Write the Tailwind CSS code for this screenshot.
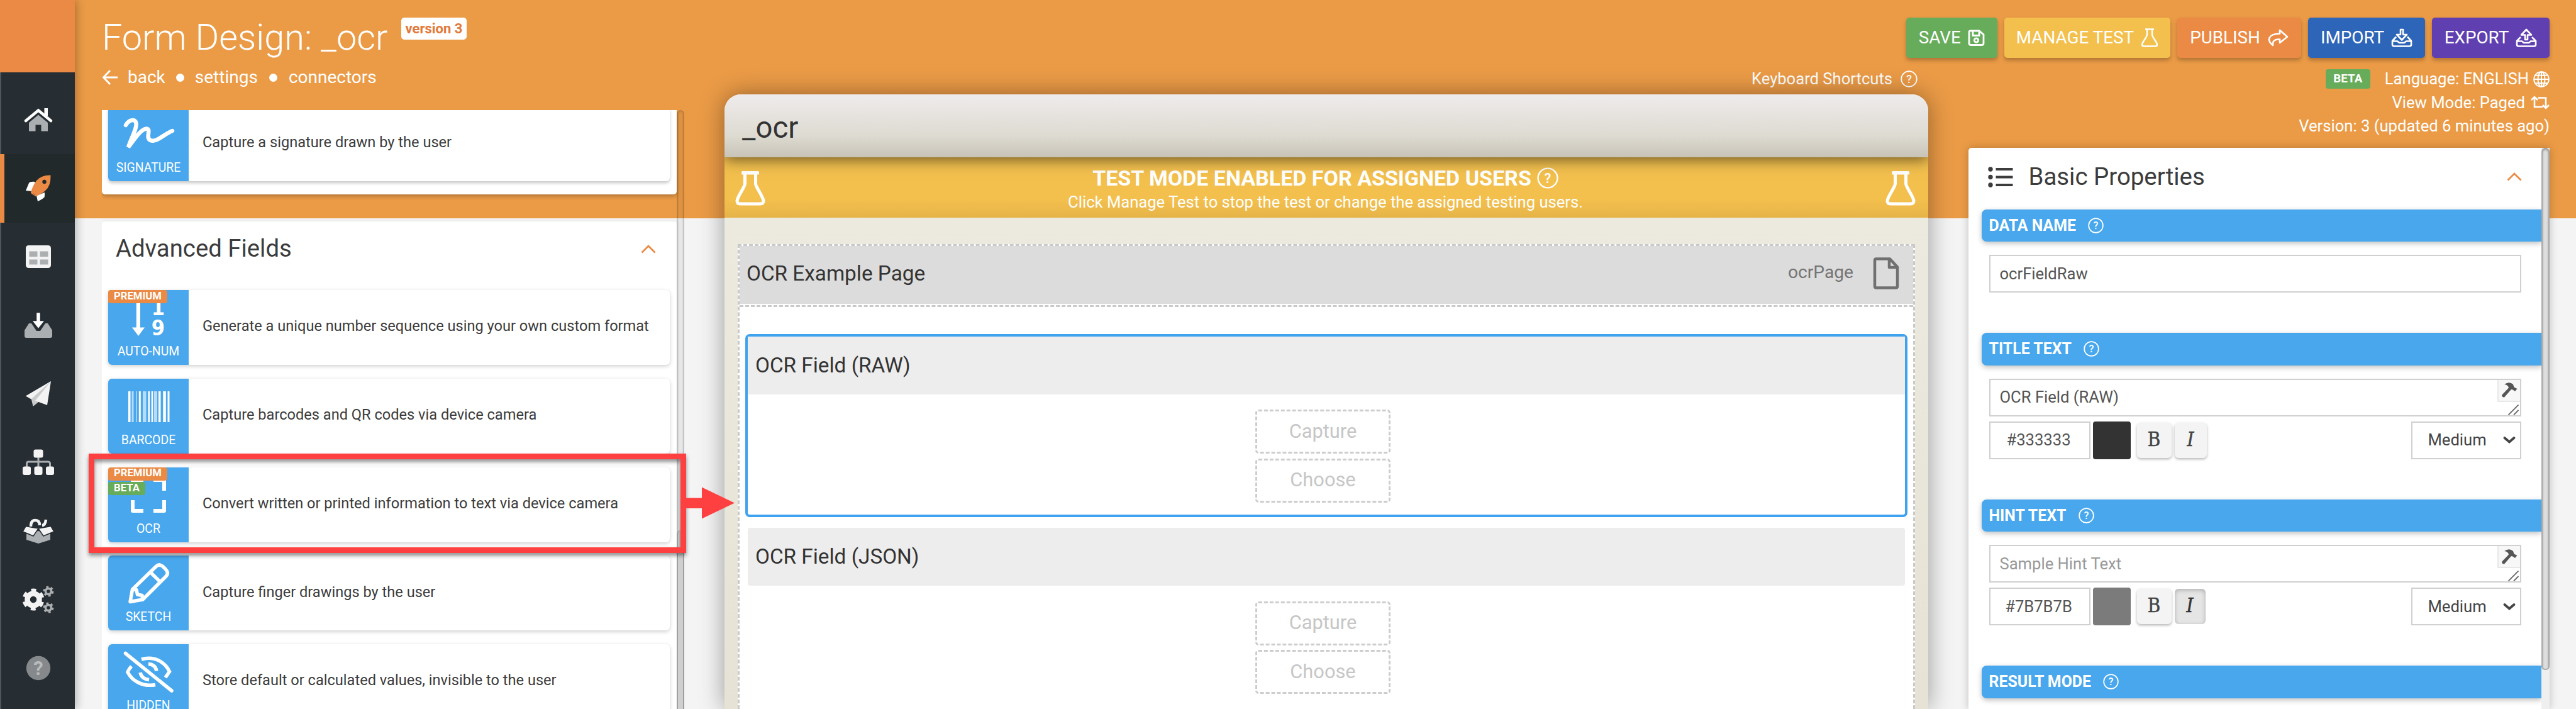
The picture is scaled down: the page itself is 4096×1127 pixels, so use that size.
<!DOCTYPE html>
<html lang="en">
<head>
<meta charset="utf-8">
<title>Form Design: _ocr</title>
<script src="https://cdn.jsdelivr.net/npm/@tailwindcss/browser@4"></script>
</head>
<body class="relative flex h-[1127px] w-[4096px] overflow-hidden bg-[#f4f4f4] font-['Roboto',sans-serif] text-[#3c3c3c]">

<svg class="hidden">
  <symbol id="help" viewBox="0 0 26 26">
    <circle cx="13" cy="13" r="11.8" fill="none" stroke="currentColor" stroke-width="1.8"/>
    <text x="13" y="19" text-anchor="middle" font-family="Roboto" font-weight="500" font-size="17" fill="currentColor">?</text>
  </symbol>
  <symbol id="flask" viewBox="0 0 48 56">
    <path d="M15.500 5 V21 C15.500 26 4 41 3 48 Q3 53 8 53 H40 Q45 53 45 48 C44 41 32.500 26 32.500 21 V5" fill="none" stroke="currentColor" stroke-width="5"/>
    <rect x="10" y="1" width="28" height="5.500" rx="1.500" fill="currentColor"/>
  </symbol>
  <symbol id="hammer" viewBox="0 0 26 26">
    <path d="M5 4 Q13 -1.500 19 4 L20.500 8.500 L25.500 11 L22 15 L18.500 12.500 L16 12 L5 24.500 Q1.500 25 1 21 L12 9.500 Q11 4.500 5 4Z" fill="#555"/>
  </symbol>
</svg>

<!-- Sidebar -->
<nav class="relative z-20 flex w-[119px] shrink-0 flex-col border-l-[2px] border-[#50575b] bg-[#262d33] shadow-[2px_0_14px_rgba(0,0,0,0.3)]">
  <div class="-ml-[2px] mb-[20.5px] h-[115px] shrink-0 bg-[#eb8a44]"></div>
  <div class="flex h-[109px] shrink-0 items-center justify-center">
    <svg class="size-[52px]" viewBox="-26 -26 52 52"><path d="M0 -7.500 L15 5 V18.500 H4.500 V8.500 H-4.500 V18.500 H-15 V5Z" fill="#abafb1"/><path d="M-20 2 L0 -14.500 L20 2" fill="none" stroke="#fff" stroke-width="4.500" stroke-linecap="round"/><rect x="9.500" y="-18" width="5.500" height="12" fill="#fff"/></svg>
  </div>
  <div class="-ml-[2px] flex h-[109px] shrink-0 items-center justify-center border-l-[7px] border-[#eb8a44] bg-[#22292b] pr-[5px]">
    <svg class="size-[52px]" viewBox="-26 -26 52 52"><path d="M-20 4 L-15 -8 Q-13 -11 -5 -10 L-10 5Z M-3 12 L10 7 V13 Q10 16 -1 21Z" fill="#fff"/><path d="M19.500 -20.500 Q20 -3 11 4 Q5 10 -5 13 L-7 9 L-12 7 Q-9 -4 -3 -12 Q5 -21 19.500 -20.500Z" fill="#eb8a44"/><path d="M-11 4 L-5 13 L-12 8Z" fill="#eb8a44"/><circle cx="9.500" cy="-10" r="3.200" fill="#22292b"/></svg>
  </div>
  <div class="flex h-[109px] shrink-0 items-center justify-center">
    <svg class="size-[52px]" viewBox="-26 -26 52 52"><rect x="-20" y="-18" width="40" height="36" rx="4.500" fill="#f3f3f3"/><path d="M-14.500 -8.500h13v8.500h-13z M2.500 -8.500h13v8.500h-13z M-14.500 4.500h13v8h-13z M2.500 4.500h13v8h-13z" fill="#abafb1"/></svg>
  </div>
  <div class="flex h-[109px] shrink-0 items-center justify-center">
    <svg class="size-[52px]" viewBox="-26 -26 52 52"><path d="M-15 -3 H-11 L-3 9 H3 L11 -3 H15 L22 8 V17 Q22 20 19 20 H-19 Q-22 20 -22 17 V8Z" fill="#abafb1"/><path d="M-3.500 -20.500 H3.500 V-7.500 H10.500 L0 6 L-10.500 -7.500 H-3.500Z" fill="#fff" stroke="#262d33" stroke-width="1.500"/></svg>
  </div>
  <div class="flex h-[109px] shrink-0 items-center justify-center">
    <svg class="size-[52px]" viewBox="-26 -26 52 52"><path d="M20 -20 L-20 3.500 L-11 9 L-8.500 20 L-1 14 Z" fill="#c9cbcc"/><path d="M20 -20 L-20 3.500 L-11 8Z M20 -20 L-5 11 L14 18Z" fill="#f3f3f3"/></svg>
  </div>
  <div class="flex h-[109px] shrink-0 items-center justify-center">
    <svg class="size-[52px]" viewBox="-26 -26 52 52"><path d="M0 -8 V7 M-18.500 7 V2 Q-18.500 -1 -15.500 -1 H15.500 Q18.500 -1 18.500 2 V7" fill="none" stroke="#abafb1" stroke-width="3"/><rect x="-7.500" y="-20.500" width="15" height="13" rx="3" fill="#f3f3f3"/><rect x="-25" y="6.500" width="13" height="13.500" rx="3" fill="#f3f3f3"/><rect x="-6.500" y="6.500" width="13" height="13.500" rx="3" fill="#f3f3f3"/><rect x="12" y="6.500" width="13" height="13.500" rx="3" fill="#f3f3f3"/></svg>
  </div>
  <div class="flex h-[109px] shrink-0 items-center justify-center">
    <svg class="size-[52px]" viewBox="-26 -26 52 52"><path d="M-19 5 L0 0 L19 5 V14 L0 20 L-19 14Z" fill="#abafb1"/><path d="M-12 -7 Q-12 -17 -5 -17 Q2 -17 2 -9 M6 -9 Q11 -9 12 -18" fill="none" stroke="#f3f3f3" stroke-width="4.500"/><path d="M-20 -7.500 L0 -4 L20 -7.500 L25 1 L8 8 L0 -4 L-8 8 L-25 1Z" fill="#f3f3f3" stroke="#262d33" stroke-width="1.500"/></svg>
  </div>
  <div class="flex h-[109px] shrink-0 items-center justify-center">
    <svg class="size-[52px]" viewBox="-26 -26 52 52"><circle cx="-8" cy="0" r="9.500" fill="none" stroke="#f3f3f3" stroke-width="8.500"/><circle cx="-8" cy="0" r="15" fill="none" stroke="#f3f3f3" stroke-width="5" stroke-dasharray="7.850 7.850" stroke-dashoffset="-4"/><circle cx="16" cy="-13" r="4.500" fill="none" stroke="#abafb1" stroke-width="3.600"/><circle cx="16" cy="-13" r="7" fill="none" stroke="#abafb1" stroke-width="3" stroke-dasharray="3.660 3.660"/><circle cx="16" cy="13" r="4.500" fill="none" stroke="#abafb1" stroke-width="3.600"/><circle cx="16" cy="13" r="7" fill="none" stroke="#abafb1" stroke-width="3" stroke-dasharray="3.660 3.660"/></svg>
  </div>
  <div class="flex h-[109px] shrink-0 items-center justify-center">
    <svg class="size-[52px]" viewBox="-26 -26 52 52"><circle r="19.200" fill="#85898c"/><text y="11" text-anchor="middle" font-family="Roboto" font-weight="700" font-size="31" fill="#b9bbbc">?</text></svg>
  </div>
</nav>

<main class="relative flex min-w-0 flex-1 flex-col bg-[linear-gradient(#eb9b46_0,#eb9b46_347.5px,#f4f4f4_347.5px)] pl-[43px] pr-[42px] text-white">
  <!-- Title and actions -->
  <header class="flex h-[92px] shrink-0 items-end justify-between">
    <div class="flex items-start pb-[1px]">
      <h1 class="w-[476px] whitespace-nowrap text-[57.6px] font-light leading-[62px]">Form Design: _ocr</h1>
      <span class="-mt-[1px] flex h-[35px] w-[104px] items-center justify-center rounded-[5px] bg-white text-[22px] font-bold text-[#e2793a]">version 3</span>
    </div>
    <div class="flex gap-[11px] text-[27.8px]">
      <button class="flex h-[64px] w-[145.500px] items-center justify-center gap-[11px] rounded-[5px] bg-[#67ac5b] shadow-[0_4px_6px_rgba(0,0,0,0.25)]">SAVE
        <svg class="h-[26px] w-[27px]" viewBox="0 0 27 26" fill="none" stroke="currentColor" stroke-width="2.800"><path d="M4 2 H18 L25 8 V22 Q25 24.500 22 24.500 H5 Q2 24.500 2 22 V4 Q2 2 4 2Z M8 2 V9.500 H18 V3"/><circle cx="13.500" cy="17" r="3.200"/></svg>
      </button>
      <button class="flex h-[64px] w-[264px] items-center justify-center gap-[11px] rounded-[5px] bg-[#f3c04e] shadow-[0_4px_6px_rgba(0,0,0,0.25)]">MANAGE TEST
        <svg class="h-[30px] w-[28px]" viewBox="0 0 28 30" fill="none" stroke="currentColor" stroke-width="2.400"><path d="M7 1.500 H21 M10 2 V10 C10 14 2 22 2 26 Q2 28.500 5 28.500 H23 Q26 28.500 26 26 C26 22 18 14 18 10 V2"/></svg>
      </button>
      <button class="flex h-[64px] w-[197px] items-center justify-center gap-[11px] rounded-[5px] bg-[#eb8a44] shadow-[0_4px_6px_rgba(0,0,0,0.25)]">PUBLISH
        <svg class="h-[28px] w-[34px]" viewBox="0 0 34 28" fill="none" stroke="currentColor" stroke-width="2.600" stroke-linejoin="round"><path d="M20 2 L32 12.500 L20 22 V16.500 C12 16 8 19 9 26 C-1 18 1 8 20 7.500Z"/></svg>
      </button>
      <button class="flex h-[64px] w-[186px] items-center justify-center gap-[11px] rounded-[5px] bg-[#2d65b9] shadow-[0_4px_6px_rgba(0,0,0,0.25)]">IMPORT
        <svg class="h-[30px] w-[34px]" viewBox="0 0 34 30" fill="none" stroke="currentColor" stroke-width="2.600" stroke-linejoin="round"><path d="M15 2 H19 V10 H25 L17 18.500 L9 10 H15Z M8 13.500 L2 20 V26 Q2 28.500 5 28.500 H29 Q32 28.500 32 26 V20 L26 13.500 M2 20.500 H10 L13 23 H21 L24 20.500 H32"/></svg>
      </button>
      <button class="flex h-[64px] w-[187px] items-center justify-center gap-[11px] rounded-[5px] bg-[#603fb1] shadow-[0_4px_6px_rgba(0,0,0,0.25)]">EXPORT
        <svg class="h-[30px] w-[34px]" viewBox="0 0 34 30" fill="none" stroke="currentColor" stroke-width="2.600" stroke-linejoin="round"><path d="M15 18 H19 V10.500 H25 L17 2 L9 10.500 H15Z M8 14 L2 20 V26 Q2 28.500 5 28.500 H29 Q32 28.500 32 26 V20 L26 14 M2 20.500 H10 L13 23 H21 L24 20.500 H32"/></svg>
      </button>
    </div>
  </header>

  <div class="flex min-h-0 flex-1">
    <!-- Field palette -->
    <section class="flex w-[926px] shrink-0 flex-col">
      <div class="flex h-[83px] shrink-0 items-center pb-[21px] text-[28px]">
        <svg class="mr-[16px] h-[26px] w-[25px]" viewBox="0 0 25 26" fill="none" stroke="currentColor" stroke-width="2.800"><path d="M13 2 L2.500 13 L13 24 M2.500 13 H25"/></svg>
        <span>back</span>
        <i class="mx-[17px] size-[13px] rounded-full bg-white"></i>
        <span>settings</span>
        <i class="mx-[18px] size-[13px] rounded-full bg-white"></i>
        <span>connectors</span>
      </div>
      <div class="relative flex min-h-0 flex-1 overflow-hidden text-[#3c3c3c]">
        <div class="flex w-[914px] shrink-0 flex-col">
          <div class="z-10 h-[134px] shrink-0 rounded-b-[5px] bg-white shadow-[0_3px_6px_rgba(0,0,0,0.25)]">
            <div class="-mt-[6px] ml-[10px] flex h-[119px] w-[893px] items-center rounded-[6px] bg-white text-[23.6px] shadow-[0_3px_5px_rgba(0,0,0,0.22)]">
              <div class="mr-[22px] h-[119px] w-[128px] rounded-l-[6px] bg-[#48a7ed] text-center text-[19.4px] leading-[27px] text-white">
                <svg class="block h-[84px] w-[128px]" viewBox="0 0 128 84" fill="none" stroke="#fff" stroke-width="6.500" stroke-linecap="round"><path d="M28 30 C33 21 43 19 44.500 27 C46 35 36 52 32 65 C42 52 52 36 61 35.500 C69 36 59 50 67 54 C77 58 89 44 102 39"/></svg>
                SIGNATURE
              </div>
              <span class="-mt-[3px]">Capture a signature drawn by the user</span>
            </div>
          </div>
          <div class="mt-[43px] flex min-h-0 flex-1 flex-col overflow-hidden rounded-t-[4px] bg-white pl-[10px] shadow-[0_0_6px_rgba(0,0,0,0.08)]">
            <div class="mb-[24px] flex h-[85px] shrink-0 items-center justify-between pl-[12px] pr-[33px]">
              <h2 class="text-[38.3px]">Advanced Fields</h2>
              <svg class="mt-[2px] h-[14px] w-[24px]" viewBox="0 0 24 14" fill="none" stroke="#eb8a44" stroke-width="2.800"><path d="M1.500 12.500 L12 2 L22.500 12.500"/></svg>
            </div>
            <div class="flex w-[893px] flex-col gap-[21.8px] text-[23.6px]">
              <div class="relative flex h-[119px] shrink-0 items-center rounded-[6px] bg-white shadow-[0_2px_6px_rgba(0,0,0,0.2)]">
                <div class="mr-[22px] h-[119px] w-[128px] rounded-l-[6px] bg-[#48a7ed] text-center text-[19.4px] leading-[27px] text-white">
                  <svg class="block h-[84px] w-[128px]" viewBox="0 0 128 84" fill="#fff"><path d="M44.800 12 H51 V59.500 H58 L48 73 L38 59.500 H44.800Z"/><text x="79.500" y="40" text-anchor="middle" font-family="DejaVu Sans Condensed, DejaVu Sans" font-stretch="condensed" font-weight="700" font-size="34">1</text><text x="79.500" y="72" text-anchor="middle" font-family="DejaVu Sans Condensed, DejaVu Sans" font-stretch="condensed" font-weight="700" font-size="34">9</text></svg>
                  AUTO-NUM
                </div>
                <span class="-mt-[3px]">Generate a unique number sequence using your own custom format</span>
                <span class="absolute left-0 top-0 flex h-[21px] w-[94px] items-center justify-center rounded-[4px] bg-[#eb8a44] pb-[1px] text-[16.7px] font-bold leading-none text-white">PREMIUM</span>
              </div>
              <div class="flex h-[119px] shrink-0 items-center rounded-[6px] bg-white shadow-[0_2px_6px_rgba(0,0,0,0.2)]">
                <div class="mr-[22px] h-[119px] w-[128px] rounded-l-[6px] bg-[#48a7ed] text-center text-[19.4px] leading-[27px] text-white">
                  <svg class="block h-[84px] w-[128px]" viewBox="0 0 128 84" fill="#fff"><path d="M32 20h3.500v49H32z M48.800 20h3v49h-3z M63.500 20h2.600v49h-2.600z M68.700 20h2.600v49h-2.600z M80 20h3.500v49H80z M87.300 20h4.500v49h-4.500z M94.500 20h3v49h-3z"/><path opacity=".6" d="M37.500 20h3v49h-3z M44.500 20h1.500v49h-1.500z M55 20h5.500v49H55z M73 20h5v49h-5z"/></svg>
                  BARCODE
                </div>
                <span class="-mt-[3px]">Capture barcodes and QR codes via device camera</span>
              </div>
              <div class="relative flex h-[119px] shrink-0 items-center rounded-[6px] bg-white shadow-[0_2px_6px_rgba(0,0,0,0.2)]">
                <div class="mr-[22px] h-[119px] w-[128px] rounded-l-[6px] bg-[#48a7ed] text-center text-[19.4px] leading-[27px] text-white">
                  <svg class="block h-[84px] w-[128px]" viewBox="0 0 128 84" fill="none" stroke="#fff" stroke-width="6" stroke-linejoin="round"><path d="M39 37 V20 H56 M72 20 H89 V37 M39 52 V69 H56 M72 69 H89 V52"/></svg>
                  OCR
                </div>
                <span class="-mt-[3px]">Convert written or printed information to text via device camera</span>
                <span class="absolute left-0 top-0 flex h-[21px] w-[94px] items-center justify-center rounded-[4px] bg-[#eb8a44] pb-[1px] text-[16.7px] font-bold leading-none text-white">PREMIUM</span>
                <span class="absolute left-0 top-[23.500px] flex h-[21px] w-[59px] items-center justify-center rounded-[4px] bg-[#67ac5b] pb-[1px] text-[16.7px] font-bold leading-none text-white">BETA</span>
              </div>
              <div class="flex h-[119px] shrink-0 items-center rounded-[6px] bg-white shadow-[0_2px_6px_rgba(0,0,0,0.2)]">
                <div class="mr-[22px] h-[119px] w-[128px] rounded-l-[6px] bg-[#48a7ed] text-center text-[19.4px] leading-[27px] text-white">
                  <svg class="block h-[84px] w-[128px]" viewBox="0 0 128 84" fill="none" stroke="#fff" stroke-width="5.500" stroke-linejoin="round"><path d="M35 73.500 L38.500 54 L76 17.500 Q81.500 12.500 87 17.500 L91.500 22 Q97 28 92 33 L55 70Z M67 26.500 L83 42 M38.500 54 L45 54.500 L46.500 62 L54 63.500 L55 70"/></svg>
                  SKETCH
                </div>
                <span class="-mt-[3px]">Capture finger drawings by the user</span>
              </div>
              <div class="flex h-[119px] shrink-0 items-center rounded-[6px] bg-white shadow-[0_2px_6px_rgba(0,0,0,0.2)]">
                <div class="mr-[22px] h-[119px] w-[128px] rounded-l-[6px] bg-[#48a7ed] text-center text-[19.4px] leading-[27px] text-white">
                  <svg class="block h-[84px] w-[128px]" viewBox="0 0 128 84" fill="none" stroke="#fff" stroke-width="5.500"><path d="M27.500 14.500 L101 74" stroke-linecap="round"/><path d="M53 24 C74 18 91 29 97.500 43.500 L91 53 M37 35 Q32 41 31 44.500 C39 60 57 68 75 64.500"/><path d="M64 31.500 Q75 32 77 42.500 M51 45 Q53 55 65 56.500"/></svg>
                  HIDDEN
                </div>
                <span class="-mt-[3px]">Store default or calculated values, invisible to the user</span>
              </div>
            </div>
          </div>
        </div>
        <div class="flex w-[12px] flex-col rounded-t-[6px] border-x-2 border-black/15 bg-black/5 pt-[668px] shadow-[inset_0_2px_3px_rgba(0,0,0,0.15)]">
          <div class="-mx-[2px] flex-1 rounded-t-[6px] border-x-2 border-[#a0a0a0] bg-[#cfcfcf]"></div>
        </div>
      </div>
    </section>

    <!-- Form preview -->
    <section class="ml-[64px] flex w-[1914px] shrink-0 flex-col">
      <div class="flex h-[58px] shrink-0 items-center justify-end pr-[17px] pt-[9px] text-[25.6px]">
        <span class="mr-[13px]">Keyboard Shortcuts</span>
        <svg class="size-[27px]"><use href="#help"/></svg>
      </div>
      <div class="flex min-h-0 flex-1 flex-col overflow-hidden rounded-t-[26px] bg-[linear-gradient(#f1eee6,#ece9df_200px,#e6e2d5)] shadow-[0_0_38px_rgba(0,0,0,0.38)]">
        <div class="z-10 flex h-[100px] shrink-0 items-center bg-[linear-gradient(#eeebec,#dedbd2_65%,#c8c3b7)] pl-[28px] pt-[8px] text-[47.4px] text-[#333] shadow-[0_4px_22px_rgba(0,0,0,0.55)]">_ocr</div>
        <div class="flex h-[95.500px] shrink-0 items-center justify-between bg-[linear-gradient(#f3c04e_70%,#e6b348)] pl-[17px] pr-[20px]">
          <svg class="mt-[3px] h-[56px] w-[48px]"><use href="#flask"/></svg>
          <div class="flex flex-col items-center pt-[5px]">
            <div class="flex items-center gap-[9px] text-[34px] font-bold leading-[42px]">TEST MODE ENABLED FOR ASSIGNED USERS <svg class="size-[34px]"><use href="#help"/></svg></div>
            <div class="text-[25.600px] leading-[34px]">Click Manage Test to stop the test or change the assigned testing users.</div>
          </div>
          <svg class="mt-[3px] h-[56px] w-[48px]"><use href="#flask"/></svg>
        </div>
        <div class="mx-[21px] mt-[42px] flex min-h-0 flex-1 flex-col border-[3px] border-b-0 border-dashed border-[#c9c9c9] bg-white text-[#333]">
          <div class="flex h-[92px] shrink-0 items-center justify-between bg-[#dcdcdc] pb-[3px] pl-[11px] pr-[22px] text-[33.3px]">
            <span>OCR Example Page</span>
            <div class="flex items-center text-[28.2px] text-[#757575]">
              <span class="mr-[31px] -mt-[4px]">ocrPage</span>
              <svg class="-mt-[2px] h-[51px] w-[42px]" viewBox="0 0 42 51" fill="none" stroke="#707070" stroke-width="4.500" stroke-linejoin="round"><path d="M5 2.500 H27 L39 15.500 V46 Q39 48.500 36.500 48.500 H5.500 Q3 48.500 3 46 V5 Q3 2.500 5 2.500Z M26 3 V16 H39"/></svg>
            </div>
          </div>
          <div class="h-[5px] shrink-0 border-b-[3px] border-dashed border-[#c9c9c9]"></div>
          <div class="mx-[9px] mt-[43px] flex h-[291px] shrink-0 flex-col items-center rounded-[7px] border-[4px] border-[#3ea2ee]">
            <div class="flex h-[92px] w-full items-center bg-[#ededed] pl-[12px] text-[33.3px]">OCR Field (RAW)</div>
            <div class="mr-[11px] mt-[24.500px] flex flex-col gap-[7.500px] text-[30.8px] text-[#c6c6c6]">
              <span class="flex h-[70px] w-[215px] items-center justify-center rounded-[5px] border-[3px] border-dashed border-[#cdcdcd]">Capture</span>
              <span class="flex h-[70px] w-[215px] items-center justify-center rounded-[5px] border-[3px] border-dashed border-[#cdcdcd]">Choose</span>
            </div>
          </div>
          <div class="mx-[13px] mt-[17px] flex shrink-0 flex-col items-center">
            <div class="flex h-[92px] w-full items-center rounded-[4px] bg-[#ededed] pl-[12px] text-[33.3px]">OCR Field (JSON)</div>
            <div class="mr-[11px] mt-[25px] flex flex-col gap-[7.500px] text-[30.8px] text-[#c6c6c6]">
              <span class="flex h-[70px] w-[215px] items-center justify-center rounded-[5px] border-[3px] border-dashed border-[#cdcdcd]">Capture</span>
              <span class="flex h-[70px] w-[215px] items-center justify-center rounded-[5px] border-[3px] border-dashed border-[#cdcdcd]">Choose</span>
            </div>
          </div>
        </div>
      </div>
    </section>

    <!-- Properties -->
    <section class="ml-[64px] flex min-w-0 flex-1 flex-col">
      <div class="flex h-[143px] shrink-0 flex-col items-end pt-[15px] text-[25.6px] leading-[37.6px]">
        <div class="flex items-center"><span class="mr-[23px] flex h-[31px] w-[71px] items-center justify-center rounded-[4px] bg-[#67ac5b] text-[18.8px] font-bold">BETA</span>Language: ENGLISH
          <svg class="ml-[7px] size-[26px]" viewBox="0 0 26 26" fill="none" stroke="currentColor" stroke-width="2"><circle cx="13" cy="13" r="11.800"/><ellipse cx="13" cy="13" rx="5.500" ry="11.800"/><path d="M13 1 V25 M1 13 H25 M3 6.800 H23 M3 19.200 H23"/></svg>
        </div>
        <div class="flex items-center">View Mode: Paged
          <svg class="ml-[9px] h-[22px] w-[30px]" viewBox="0 0 30 22" fill="none" stroke="currentColor" stroke-width="2.600"><path d="M1 7 L6 2 L11 7 M6 2 V18 H19 M11.500 3.500 H24 V20 M19 15 L24 20 L29 15"/></svg>
        </div>
        <div>Version: 3 (updated 6 minutes ago)</div>
      </div>
      <div class="flex min-h-0 flex-1 rounded-tl-[5px] text-[#555] shadow-[0_0_14px_rgba(0,0,0,0.22)]">
        <div class="flex w-[911px] flex-col overflow-hidden rounded-tl-[5px] bg-white pl-[20.500px]">
          <div class="mb-[5.600px] flex h-[92px] shrink-0 items-center pl-[10px] pr-[31px] text-[38.4px] text-[#3c3c3c]">
            <svg class="mr-[25px] h-[33px] w-[40px]" viewBox="0 0 40 33" fill="none" stroke="#3c3c3c" stroke-width="4"><path d="M12.500 4 H39.500 M12.500 16.500 H39.500 M12.500 29 H39.500"/><g fill="#3c3c3c" stroke="none"><circle cx="4" cy="4" r="3.700"/><circle cx="4" cy="16.500" r="3.700"/><circle cx="4" cy="29" r="3.700"/></g></svg>
            <h2 class="flex-1">Basic Properties</h2>
            <svg class="h-[14px] w-[24px]" viewBox="0 0 24 14" fill="none" stroke="#eb8a44" stroke-width="2.800"><path d="M1.500 12.500 L12 2 L22.500 12.500"/></svg>
          </div>

          <div class="flex h-[51.500px] shrink-0 items-center gap-[19px] rounded-l-[8px] bg-[#48a7ed] pl-[12px] text-[24.9px] font-bold text-white shadow-[0_3px_8px_rgba(0,0,0,0.25)]">DATA NAME<svg class="size-[25px]"><use href="#help"/></svg></div>
          <div class="ml-[12px] mt-[21px] flex h-[60px] w-[846px] shrink-0 items-center border-2 border-[#d0d0d0] pl-[15px] text-[25.6px]">ocrFieldRaw</div>

          <div class="mt-[64px] flex h-[51.500px] shrink-0 items-center gap-[19px] rounded-l-[8px] bg-[#48a7ed] pl-[12px] text-[24.9px] font-bold text-white shadow-[0_3px_8px_rgba(0,0,0,0.25)]">TITLE TEXT<svg class="size-[25px]"><use href="#help"/></svg></div>
          <div class="relative ml-[12px] mt-[21px] flex h-[60px] w-[846px] shrink-0 items-center border-2 border-[#d0d0d0] pl-[15px] text-[25.6px]">OCR Field (RAW)
            <span class="absolute right-0 top-0 flex h-[35px] w-[36px] items-center justify-center border-b-2 border-l-2 border-[#e8e8e8] bg-[#f7f7f7]"><svg class="size-[26px]"><use href="#hammer"/></svg></span>
            <svg class="absolute bottom-0 right-[2px] size-[17px]" viewBox="0 0 17 17" stroke="#666" stroke-width="1.800"><path d="M0.500 16.500 L16.500 0.500 M9 16.500 L16.500 9"/></svg>
          </div>
          <div class="ml-[12px] mt-[8px] flex h-[60px] w-[846px] shrink-0 items-center text-[25.6px]">
            <span class="mr-[4px] flex h-full w-[161px] items-center justify-center border-2 border-[#d0d0d0] pr-[3px]">#333333</span>
            <span class="mr-[10px] h-full w-[60px] rounded-[4px] bg-[#333]"></span>
            <span class="mr-[5px] flex h-[56px] w-[55px] items-center justify-center rounded-[6px] bg-[#f4f4f4] font-['DejaVu_Serif_Condensed','DejaVu_Serif',serif] text-[31px] text-[#444] shadow-[0_2px_4px_rgba(0,0,0,0.3)]"><span class="-mt-[3px] [-webkit-text-stroke:0.5px_#444]">B</span></span>
            <span class="flex h-[56px] w-[51px] items-center justify-center rounded-[6px] bg-[#f4f4f4] font-['DejaVu_Serif_Condensed','DejaVu_Serif',serif] text-[31px] italic text-[#444] shadow-[0_2px_4px_rgba(0,0,0,0.3)]"><span class="-mt-[3px] [-webkit-text-stroke:0.5px_#444]">I</span></span>
            <span class="ml-auto flex h-full w-[175px] items-center justify-between border-2 border-[#d0d0d0] pl-[25px] pr-[7px] text-[#444]">Medium<svg class="h-[13px] w-[20px]" viewBox="0 0 20 13" fill="none" stroke="#444" stroke-width="3.800" stroke-linecap="round"><path d="M2.500 3 L10 9.500 L17.500 3"/></svg></span>
          </div>

          <div class="mt-[64px] flex h-[51.500px] shrink-0 items-center gap-[19px] rounded-l-[8px] bg-[#48a7ed] pl-[12px] text-[24.9px] font-bold text-white shadow-[0_3px_8px_rgba(0,0,0,0.25)]">HINT TEXT<svg class="size-[25px]"><use href="#help"/></svg></div>
          <div class="relative ml-[12px] mt-[21px] flex h-[60px] w-[846px] shrink-0 items-center border-2 border-[#d0d0d0] pl-[15px] text-[25.6px] text-[#999]">Sample Hint Text
            <span class="absolute right-0 top-0 flex h-[35px] w-[36px] items-center justify-center border-b-2 border-l-2 border-[#e8e8e8] bg-[#f7f7f7]"><svg class="size-[26px]"><use href="#hammer"/></svg></span>
            <svg class="absolute bottom-0 right-[2px] size-[17px]" viewBox="0 0 17 17" stroke="#666" stroke-width="1.800"><path d="M0.500 16.500 L16.500 0.500 M9 16.500 L16.500 9"/></svg>
          </div>
          <div class="ml-[12px] mt-[8px] flex h-[60px] w-[846px] shrink-0 items-center text-[25.6px]">
            <span class="mr-[4px] flex h-full w-[161px] items-center justify-center border-2 border-[#d0d0d0] pr-[3px]">#7B7B7B</span>
            <span class="mr-[10px] h-full w-[60px] rounded-[4px] bg-[#7b7b7b]"></span>
            <span class="mr-[5px] flex h-[56px] w-[55px] items-center justify-center rounded-[6px] bg-[#f4f4f4] font-['DejaVu_Serif_Condensed','DejaVu_Serif',serif] text-[31px] text-[#444] shadow-[0_2px_4px_rgba(0,0,0,0.3)]"><span class="-mt-[3px] [-webkit-text-stroke:0.5px_#444]">B</span></span>
            <span class="flex h-[56px] w-[49px] items-center justify-center rounded-[6px] bg-[#e5e5e5] font-['DejaVu_Serif_Condensed','DejaVu_Serif',serif] text-[31px] italic text-[#333] shadow-[inset_0_2px_7px_rgba(0,0,0,0.25)]"><span class="-mt-[3px] [-webkit-text-stroke:0.5px_#333]">I</span></span>
            <span class="ml-auto flex h-full w-[175px] items-center justify-between border-2 border-[#d0d0d0] pl-[25px] pr-[7px] text-[#444]">Medium<svg class="h-[13px] w-[20px]" viewBox="0 0 20 13" fill="none" stroke="#444" stroke-width="3.800" stroke-linecap="round"><path d="M2.500 3 L10 9.500 L17.500 3"/></svg></span>
          </div>

          <div class="mt-[64px] flex h-[51.500px] shrink-0 items-center gap-[19px] rounded-l-[8px] bg-[#48a7ed] pl-[12px] text-[24.9px] font-bold text-white shadow-[0_3px_8px_rgba(0,0,0,0.25)]">RESULT MODE<svg class="size-[25px]"><use href="#help"/></svg></div>
        </div>
        <div class="w-[13px] bg-[#efefef]">
          <div class="h-[830px] rounded-[6px] border-x-2 border-b-2 border-[#a9a9a9] bg-[#dedede] shadow-[inset_0_3px_3px_rgba(0,0,0,0.3)]"></div>
        </div>
      </div>
    </section>
  </div>
</main>

<!-- Callout around the OCR field -->
<div class="absolute left-[140.500px] top-[720.500px] z-30 h-[158px] w-[950.500px] border-[9px] border-[#fe4040] drop-shadow-[0_4px_3px_rgba(0,0,0,0.45)]"></div>
<svg class="absolute left-[1088px] top-[772px] z-30 h-[56px] w-[84px]" viewBox="0 0 84 56"><path d="M0 19.500 H28 V2.500 L80 27.500 L28 52.500 V36 H0Z" fill="#fe4040"/></svg>

</body>
</html>
